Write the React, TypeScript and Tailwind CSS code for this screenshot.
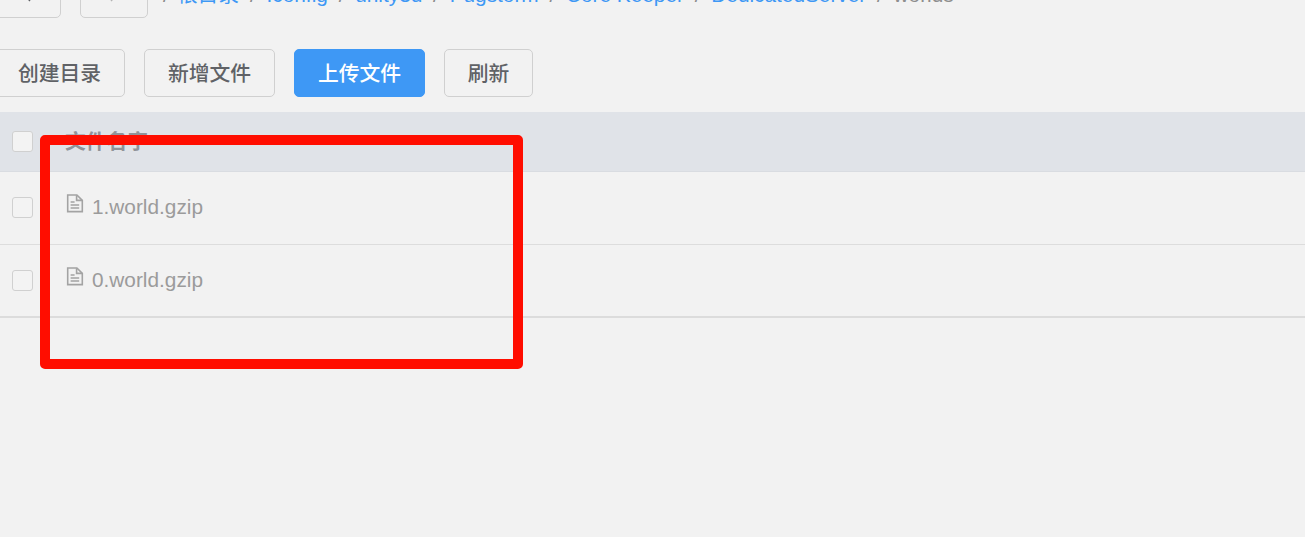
const crumbs = [".config", "unity3d", "Pugstorm", "Core Keeper", "DedicatedServer"];
const files = ["1.world.gzip", "0.world.gzip"];
const font = "[font-family:'Liberation_Sans','Noto_Sans_CJK_SC',sans-serif]";

function Sep() {
  return <span className="mx-[10.8px] text-[#8c8c8c]">/</span>;
}

function FileIcon() {
  return (
    <svg width="18" height="19" viewBox="0 0 18 19" fill="none" stroke="#a3a3a3" strokeWidth="1.6" className="shrink-0">
      <path d="M1.7 1h9.2l5.4 5.4v11.2H1.7z" />
      <path d="M10.6 1.2v5.2h5.5" />
      <path d="M4.6 8h4M4.6 11h8.6M4.6 14h8.6" />
    </svg>
  );
}

function Checkbox() {
  return <span className="block size-[21px] rounded-[3px] border border-[#d0d0d0] bg-[#f3f3f3]" />;
}

function Btn({ label, primary, width }: { label: string; primary?: boolean; width: string }) {
  return (
    <button
      className={
        primary
          ? `h-12 ${width} rounded-[5px] border border-[#3e98f5] bg-[#3e98f5] pt-[2px] text-[20.8px] font-medium text-white`
          : `h-12 ${width} rounded-[5px] border border-[#d0d0d0] bg-[#f2f2f2] pt-[2px] text-[20.8px] font-medium text-[#606266]`
      }
    >
      {label}
    </button>
  );
}

export default function App() {
  return (
    <div className={`relative h-[537px] w-[1305px] overflow-hidden bg-[#f2f2f2] ${font}`}>
      <div className="-mt-[30px] -ml-[7px] flex items-center">
        <button className="flex h-12 w-[68px] items-center justify-center rounded-[5px] border border-[#d0d0d0] text-[#606266]">
          <svg width="10" height="16" viewBox="0 0 10 16" fill="none" stroke="#606266" strokeWidth="1.4">
            <path d="M8 1 1.5 8 8 15" />
          </svg>
        </button>
        <button className="ml-[19px] flex h-12 w-[68px] items-center justify-center rounded-[5px] border border-[#d0d0d0]">
          <svg width="10" height="16" viewBox="0 0 10 16" fill="none" stroke="#b4b4b4" strokeWidth="1.4">
            <path d="M2 1l6.5 7L2 15" />
          </svg>
        </button>
        <nav className="ml-[15px] mt-[2px] flex items-center whitespace-pre text-[20.8px] leading-none">
          <span className="mr-[8px] text-[#8c8c8c]">/</span>
          <span className="text-[#3e98f5]">根目录</span>
          {crumbs.map((c) => (
            <span key={c} className="flex items-center">
              <Sep />
              <span className="text-[#3e98f5]">{c}</span>
            </span>
          ))}
          <Sep />
          <span className="text-[#8e8e8e]">worlds</span>
        </nav>
      </div>

      <div className="mt-[31px] -ml-[6px] flex gap-[19px]">
        <Btn label="创建目录" width="w-[131px]" />
        <Btn label="新增文件" width="w-[131px]" />
        <Btn label="上传文件" width="w-[131px]" primary />
        <Btn label="刷新" width="w-[89px]" />
      </div>

      <div className="mt-[15px] border-b-2 border-[#dcdcdc]">
        <div className="flex h-[60px] items-center border-b border-[#d9dce1] bg-[#e0e3e8] pl-3">
          <Checkbox />
          <span className="ml-[32px] text-[20.8px] font-bold text-[#909399]">文件名字</span>
        </div>
        {files.map((f, i) => (
          <div key={f} className={`flex items-center pl-3 ${i === 0 ? "h-[73px] border-b border-[#dddddd] pb-[1px]" : "h-[71px]"}`}>
            <Checkbox />
            <span className="-mt-[2px] ml-[33px] flex items-center gap-[8px]">
              <span className="-mt-[7px]"><FileIcon /></span>
              <span className="text-[20.8px] text-[#9b9b9b]">{f}</span>
            </span>
          </div>
        ))}
      </div>

      <div className="absolute left-[40px] top-[135px] h-[234px] w-[483px] rounded-[5px] border-[10px] border-[#ff0d00]" />
    </div>
  );
}
